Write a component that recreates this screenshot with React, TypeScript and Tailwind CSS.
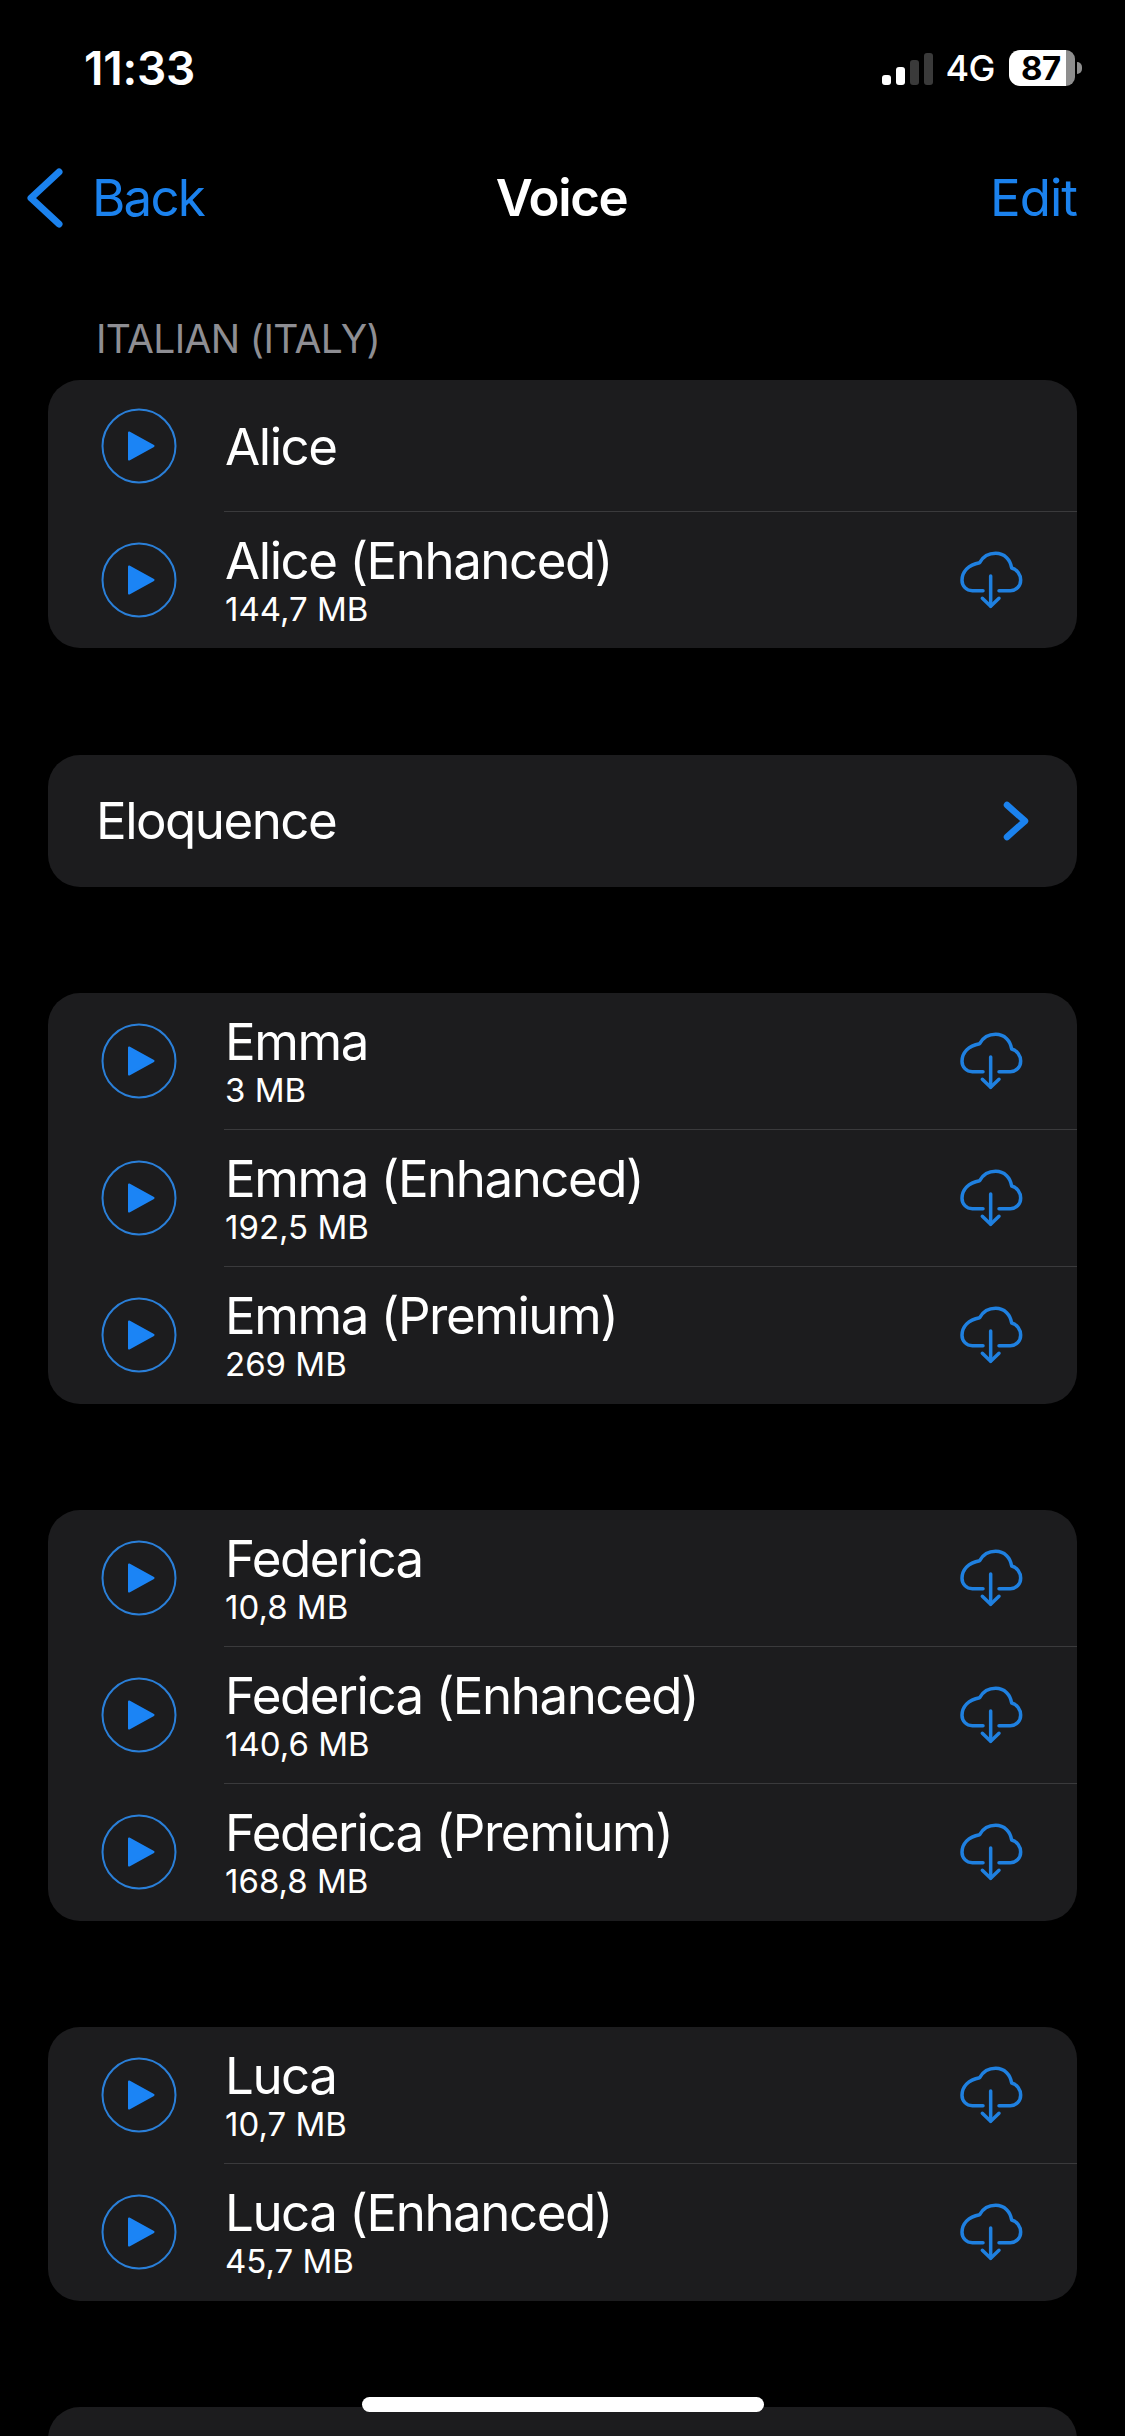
import React from 'react';

const BLUE = 'text-[#1b82ee]';

interface Voice {
  name: string;
  size?: string;
}

const groups: Voice[][] = [
  [
    { name: 'Emma', size: '3 MB' },
    { name: 'Emma (Enhanced)', size: '192,5 MB' },
    { name: 'Emma (Premium)', size: '269 MB' },
  ],
  [
    { name: 'Federica', size: '10,8 MB' },
    { name: 'Federica (Enhanced)', size: '140,6 MB' },
    { name: 'Federica (Premium)', size: '168,8 MB' },
  ],
  [
    { name: 'Luca', size: '10,7 MB' },
    { name: 'Luca (Enhanced)', size: '45,7 MB' },
  ],
];

const PlayIcon = () => (
  <svg width="76" height="76" viewBox="0 0 76 76" className="shrink-0">
    <circle cx="38" cy="38" r="36.5" fill="none" stroke="#2a7fd8" strokeWidth="2" />
    <path d="M28 24.5 L52.5 38 L28 51.5 Z" fill="#1b84f5" stroke="#1b84f5" strokeWidth="2" strokeLinejoin="round" />
  </svg>
);

const CloudIcon = () => (
  <svg width="64" height="60" viewBox="178 146 192 180" className="shrink-0" fill="none" stroke="#1f80e0" strokeWidth="10.5" strokeLinecap="round" strokeLinejoin="round">
    <path d="M250 268 H218 C200 268 187 254 187 237 C187 212 205 190 240 184 C250 166 268 156 288 156 C314 156 332 174 336 200 C352 204 363 220 363 236 C363 254 350 268 332 268 H298" />
    <path d="M273 224 V314" />
    <path d="M248 291 L273 315 L298 291" />
  </svg>
);

const VoiceRow = ({ voice, first }: { voice: Voice; first?: boolean }) => (
  <div className={`flex items-center pl-[53px] ${first ? 'h-[136px]' : 'h-[137px]'}`}>
    <PlayIcon />
    <div className={`ml-[47px] flex-1 h-full flex items-center pl-[1px] pr-[54px] ${first ? '' : 'border-t border-[#3a3a3c]'}`}>
      <div className="flex-1 pt-[1px]">
        <div className="text-[51px] leading-[52px] tracking-[-1.45px]">{voice.name}</div>
        <div className="text-[33px] leading-[36px] mt-[4px]">{voice.size}</div>
      </div>
      <CloudIcon />
    </div>
  </div>
);

export default function App() {
  return (
    <div className="relative w-[1125px] h-[2436px] overflow-hidden bg-black text-white font-['Inter','Liberation_Sans',sans-serif]">
      {/* Status bar */}
      <div className="flex items-center justify-between h-[136px] pl-[84px] pr-[43px]">
        <div className="text-[46px] font-semibold tracking-[-0.2px]">11:33</div>
        <div className="flex items-center">
          <div className="flex items-end gap-[5px] h-[32px] mt-[2px]">
            <div className="w-[9px] h-[10px] rounded-[3px] bg-white" />
            <div className="w-[9px] h-[18px] rounded-[3px] bg-white" />
            <div className="w-[9px] h-[25px] rounded-[3px] bg-[#3a3a3a]" />
            <div className="w-[9px] h-[32px] rounded-[3px] bg-[#3a3a3a]" />
          </div>
          <div className="ml-[12px] text-[36px] font-medium tracking-[-0.5px]">4G</div>
          <div className="ml-[14px] relative flex w-[66px] h-[36px]">
            <div className="w-[57px] h-full bg-white rounded-l-[11px]" />
            <div className="w-[9px] h-full bg-[#8e8e8e] rounded-r-[11px]" />
            <div className="absolute inset-0 flex items-center pl-[12px] text-[33px] leading-none font-bold text-black tracking-[-0.5px]">87</div>
          </div>
          <div className="ml-[2px] w-[5px] h-[12px] rounded-r-full bg-[#8e8e8e]" />
        </div>
      </div>

      {/* Nav bar */}
      <div className="grid grid-cols-[1fr_auto_1fr] items-center h-[124px] pl-[27px] pr-[48px] text-[51px]">
        <div className={`flex items-center ${BLUE}`}>
          <svg width="36" height="60" viewBox="0 0 36 60" fill="none" stroke="#1b82ee" strokeWidth="7" strokeLinecap="round" strokeLinejoin="round">
            <path d="M32 4 L4 30 L32 56" />
          </svg>
          <span className="ml-[29px] tracking-[-1.8px]">Back</span>
        </div>
        <div className="text-center font-semibold tracking-[-1.4px] pl-[19px]">Voice</div>
        <div className={`text-right tracking-[-1px] ${BLUE}`}>Edit</div>
      </div>

      {/* Section */}
      <div className="pl-[48px] pr-[48px]">
        <div className="pl-[48px] h-[120px] pt-[55px] text-[39px] leading-[48px] text-[#8e8e93] tracking-[-0.65px]">ITALIAN (ITALY)</div>

        <div className="flex flex-col gap-[106px]">
          <div className="rounded-[32px] bg-[#1c1c1e] mb-[1px]">
            <div className="flex items-center h-[131px] pl-[53px]">
              <PlayIcon />
              <div className="ml-[48px] pt-[3px] text-[51px] leading-[52px] tracking-[-1.45px]">Alice</div>
            </div>
            <VoiceRow voice={{ name: 'Alice (Enhanced)', size: '144,7 MB' }} />
          </div>

          <div className="rounded-[32px] bg-[#1c1c1e] h-[132px] flex items-center justify-between pl-[48px] pr-[48px]">
            <div className="text-[51px] tracking-[-1.5px]">Eloquence</div>
            <svg width="26" height="40" viewBox="0 0 26 40" fill="none" stroke="#1b82ee" strokeWidth="6.5" strokeLinecap="round" strokeLinejoin="round">
              <path d="M4 4 L22 20 L4 36" />
            </svg>
          </div>

          {groups.map((g) => (
            <div key={g[0].name} className="rounded-[32px] bg-[#1c1c1e] pb-[1px]">
              {g.map((v, i) => (
                <VoiceRow key={v.name} voice={v} first={i === 0} />
              ))}
            </div>
          ))}

          <div className="rounded-[32px] bg-[#1c1c1e] h-[132px]" />
        </div>
      </div>

      {/* Home indicator */}
      <div className="absolute left-[362px] top-[2397px] w-[402px] h-[15px] rounded-full bg-white" />
    </div>
  );
}
